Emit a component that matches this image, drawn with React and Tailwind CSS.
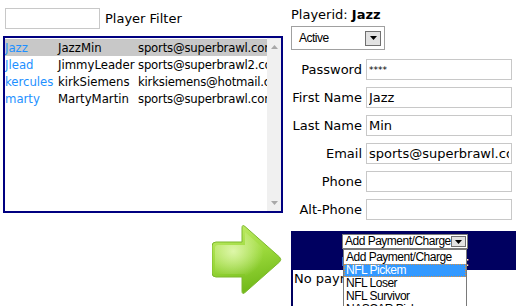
import React from 'react';

const players = [
  { id: 'Jazz', name: 'JazzMin', email: 'sports@superbrawl.com', selected: true },
  { id: 'Jlead', name: 'JimmyLeader', email: 'sports@superbrawl2.com' },
  { id: 'kercules', name: 'kirkSiemens', email: 'kirksiemens@hotmail.com' },
  { id: 'marty', name: 'MartyMartin', email: 'sports@superbrawl.com' },
];

const fields = [
  { label: 'Password', value: '****', small: true },
  { label: 'First Name', value: 'Jazz' },
  { label: 'Last Name', value: 'Min' },
  { label: 'Email', value: 'sports@superbrawl.com' },
  { label: 'Phone', value: '' },
  { label: 'Alt-Phone', value: '' },
];

const options = ['Add Payment/Charge', 'NFL Pickem', 'NFL Loser', 'NFL Survivor', 'NASCAR Pickem'];

const DropButton = () => (
  <div className="w-[16px] h-[15px] border border-[#707070] bg-[#e2e2e2] flex items-center justify-center">
    <svg width="7" height="4" viewBox="0 0 7 4">
      <path d="M0 0H7L3.5 4Z" fill="#000" />
    </svg>
  </div>
);

const GreenArrow = () => (
  <svg width="70" height="71" viewBox="0 0 70 71">
    <defs>
      <linearGradient id="ga" x1="0" y1="0" x2="0.3" y2="1">
        <stop offset="0" stopColor="#c6ef6e" />
        <stop offset="0.55" stopColor="#9ad83a" />
        <stop offset="1" stopColor="#74bb1c" />
      </linearGradient>
      <radialGradient id="gh" cx="0.3" cy="0.35" r="0.5">
        <stop offset="0" stopColor="#e4f9b4" stopOpacity="0.9" />
        <stop offset="1" stopColor="#e4f9b4" stopOpacity="0" />
      </radialGradient>
    </defs>
    <path
      d="M4 18H30V4Q30 0 33 2.5L67.5 33Q70 35.5 67.5 38L33 68.5Q30 71 30 67V53H4Q0 53 0 49V22Q0 18 4 18Z"
      fill="url(#ga)"
      stroke="#7cb82c"
      strokeWidth="1"
    />
    <path
      d="M6 21H33V8L64 35.5L33 63V50H6Q3 50 3 47V24Q3 21 6 21Z"
      fill="url(#gh)"
    />
  </svg>
);

export default function App() {
  return (
    <div className="w-[516px] h-[306px] overflow-hidden bg-white text-black font-['DejaVu_Sans',sans-serif] text-[13px]">
      <div className="flex h-[220px]">
        {/* player list */}
        <div className="w-[291px] shrink-0 pl-[3px]">
          <div className="flex items-center mt-[8px] ml-[2px]">
            <input className="w-[95px] h-[21px] border border-[#c8c8c8] outline-none" />
            <span className="ml-[5px] text-[13px] leading-[16px]">Player Filter</span>
          </div>
          <div className="mt-[7px] w-[280px] h-[177px] border-2 border-[#000080] flex">
            <div className="flex-1 overflow-hidden pt-[1px] font-['DejaVu_Sans_Condensed','DejaVu_Sans',sans-serif] font-stretch-condensed text-[13px]">
              {players.map((p) => (
                <div
                  key={p.id}
                  className={`flex h-[17px] items-center whitespace-nowrap ${p.selected ? 'bg-[#c8c8c8]' : ''}`}
                >
                  <span className="w-[53px] shrink-0 text-[#1e90ff]">{p.id}</span>
                  <span className="w-[80px] shrink-0">{p.name}</span>
                  <span className="shrink-0 tracking-[-0.2px]">{p.email}</span>
                </div>
              ))}
            </div>
            <div className="w-[14px] bg-[#f0f0f0] flex flex-col justify-between items-center">
              <div className="h-[17px] flex items-center">
                <svg width="7" height="4" viewBox="0 0 7 4"><path d="M0 4H7L3.5 0Z" fill="#a8a8a8" /></svg>
              </div>
              <div className="h-[17px] flex items-center">
                <svg width="7" height="4" viewBox="0 0 7 4"><path d="M0 0H7L3.5 4Z" fill="#a8a8a8" /></svg>
              </div>
            </div>
          </div>
        </div>

        {/* player detail */}
        <div className="flex-1">
          <div className="pt-[7px] leading-[16px]">
            Playerid: <b>Jazz</b>
          </div>
          <div className="mt-[3px] w-[94px] h-[24px] border border-[#a0a0a0] flex items-center justify-between pl-[7px] pr-[3px] font-['Liberation_Sans',sans-serif] text-[12px] tracking-[-0.5px]">
            <span>Active</span>
            <DropButton />
          </div>
          <div className="mt-[9px] flex flex-col gap-[7px]">
            {fields.map((f) => (
              <div key={f.label} className="flex items-center">
                <span className="w-[71px] text-right leading-[16px]">{f.label}</span>
                <input
                  readOnly
                  value={f.value}
                  className={`ml-[4px] w-[146px] h-[21px] border border-[#c8c8c8] px-[2px] outline-none ${f.small ? 'text-[9px]' : 'text-[13px]'}`}
                />
              </div>
            ))}
          </div>
        </div>
      </div>

      <div className="flex items-start">
        <div className="ml-[212px] mt-[4px]">
          <GreenArrow />
        </div>
        <div className="ml-[9px] mt-[11px] w-[228px] shrink-0">
          <div className="h-[39px] bg-[#000060] flex flex-col items-center">
            <div className="relative mt-[3px] w-[126px] h-[15px] bg-white border border-[#7a7a7a] flex items-center justify-between pl-[2px] pr-[1px] font-['Liberation_Sans',sans-serif] text-[12px] tracking-[-0.5px] leading-[13px] whitespace-nowrap">
              <span>Add Payment/Charge</span>
              <div className="w-[15px] h-[11px] border border-[#707070] bg-[#e2e2e2] flex items-center justify-center">
                <svg width="7" height="4" viewBox="0 0 7 4"><path d="M0 0H7L3.5 4Z" fill="#000" /></svg>
              </div>
              <div className="absolute left-[0px] top-[14px] w-[124px] bg-white border border-[#7a7a7a] pt-[1px] z-10">
                {options.map((o, i) => (
                  <div
                    key={o}
                    className={`h-[13px] leading-[13px] pl-[2px] ${i === 1 ? 'bg-[#3399ff] text-white outline-1 outline-dotted outline-[#e0903c] -outline-offset-1' : ''}`}
                  >
                    {o}
                  </div>
                ))}
              </div>
            </div>
            <div className="mt-[5px] text-white font-bold leading-[16px]">Existing Payment</div>
          </div>
          <div className="h-[60px] border-l-2 border-[#000060] pl-[1px] pt-[1px] leading-[16px]">No payments found</div>
        </div>
      </div>
    </div>
  );
}
